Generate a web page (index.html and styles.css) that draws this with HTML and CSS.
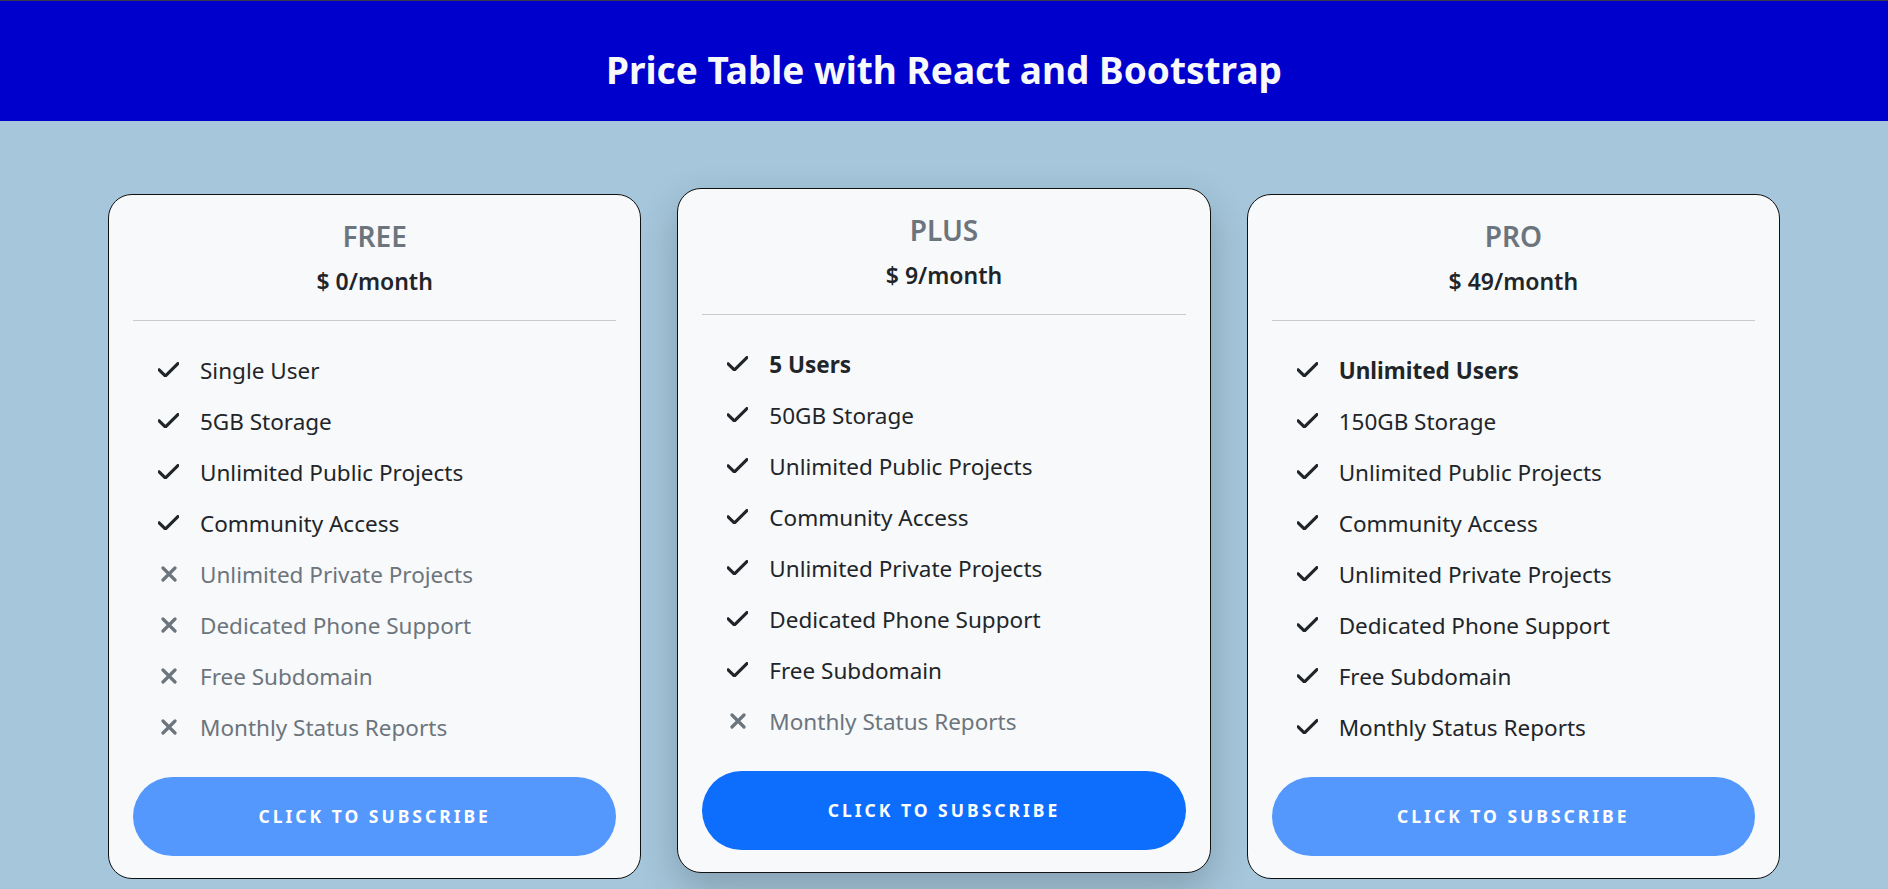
FILE: index.html
```html
<!DOCTYPE html>
<html lang="en">
<head>
<meta charset="utf-8">
<title>Price Table with React and Bootstrap</title>
<link rel="stylesheet" href="styles.css">
</head>
<body>
<header class="topbar">
  <h1 class="topbar-title">Price Table with React and Bootstrap</h1>
</header>
<main class="plans">
  <section class="plan">
    <h2 class="plan-name">FREE</h2>
    <h3 class="plan-price">$ 0/month</h3>
    <hr class="plan-rule">
    <ul class="features">
      <li class="feature"><span class="ico"><svg class="ico-check" viewBox="9 96 430 320"><path d="M438.6 105.4c12.5 12.5 12.5 32.8 0 45.3l-256 256c-12.5 12.5-32.8 12.5-45.3 0l-128-128c-12.5-12.5-12.5-32.8 0-45.3s32.8-12.5 45.3 0L160 338.7 393.4 105.4c12.5-12.5 32.8-12.5 45.3 0z"/></svg></span>Single User</li>
      <li class="feature"><span class="ico"><svg class="ico-check" viewBox="9 96 430 320"><path d="M438.6 105.4c12.5 12.5 12.5 32.8 0 45.3l-256 256c-12.5 12.5-32.8 12.5-45.3 0l-128-128c-12.5-12.5-12.5-32.8 0-45.3s32.8-12.5 45.3 0L160 338.7 393.4 105.4c12.5-12.5 32.8-12.5 45.3 0z"/></svg></span>5GB Storage</li>
      <li class="feature"><span class="ico"><svg class="ico-check" viewBox="9 96 430 320"><path d="M438.6 105.4c12.5 12.5 12.5 32.8 0 45.3l-256 256c-12.5 12.5-32.8 12.5-45.3 0l-128-128c-12.5-12.5-12.5-32.8 0-45.3s32.8-12.5 45.3 0L160 338.7 393.4 105.4c12.5-12.5 32.8-12.5 45.3 0z"/></svg></span>Unlimited Public Projects</li>
      <li class="feature"><span class="ico"><svg class="ico-check" viewBox="9 96 430 320"><path d="M438.6 105.4c12.5 12.5 12.5 32.8 0 45.3l-256 256c-12.5 12.5-32.8 12.5-45.3 0l-128-128c-12.5-12.5-12.5-32.8 0-45.3s32.8-12.5 45.3 0L160 338.7 393.4 105.4c12.5-12.5 32.8-12.5 45.3 0z"/></svg></span>Community Access</li>
      <li class="feature off"><span class="ico"><svg class="ico-x" viewBox="0 0 16 16"><path d="M2 2L14 14M14 2L2 14"/></svg></span>Unlimited Private Projects</li>
      <li class="feature off"><span class="ico"><svg class="ico-x" viewBox="0 0 16 16"><path d="M2 2L14 14M14 2L2 14"/></svg></span>Dedicated Phone Support</li>
      <li class="feature off"><span class="ico"><svg class="ico-x" viewBox="0 0 16 16"><path d="M2 2L14 14M14 2L2 14"/></svg></span>Free Subdomain</li>
      <li class="feature off"><span class="ico"><svg class="ico-x" viewBox="0 0 16 16"><path d="M2 2L14 14M14 2L2 14"/></svg></span>Monthly Status Reports</li>
    </ul>
    <button class="subscribe muted" type="button">Click to subscribe</button>
  </section>

  <section class="plan featured">
    <h2 class="plan-name">PLUS</h2>
    <h3 class="plan-price">$ 9/month</h3>
    <hr class="plan-rule">
    <ul class="features">
      <li class="feature strong"><span class="ico"><svg class="ico-check" viewBox="9 96 430 320"><path d="M438.6 105.4c12.5 12.5 12.5 32.8 0 45.3l-256 256c-12.5 12.5-32.8 12.5-45.3 0l-128-128c-12.5-12.5-12.5-32.8 0-45.3s32.8-12.5 45.3 0L160 338.7 393.4 105.4c12.5-12.5 32.8-12.5 45.3 0z"/></svg></span>5 Users</li>
      <li class="feature"><span class="ico"><svg class="ico-check" viewBox="9 96 430 320"><path d="M438.6 105.4c12.5 12.5 12.5 32.8 0 45.3l-256 256c-12.5 12.5-32.8 12.5-45.3 0l-128-128c-12.5-12.5-12.5-32.8 0-45.3s32.8-12.5 45.3 0L160 338.7 393.4 105.4c12.5-12.5 32.8-12.5 45.3 0z"/></svg></span>50GB Storage</li>
      <li class="feature"><span class="ico"><svg class="ico-check" viewBox="9 96 430 320"><path d="M438.6 105.4c12.5 12.5 12.5 32.8 0 45.3l-256 256c-12.5 12.5-32.8 12.5-45.3 0l-128-128c-12.5-12.5-12.5-32.8 0-45.3s32.8-12.5 45.3 0L160 338.7 393.4 105.4c12.5-12.5 32.8-12.5 45.3 0z"/></svg></span>Unlimited Public Projects</li>
      <li class="feature"><span class="ico"><svg class="ico-check" viewBox="9 96 430 320"><path d="M438.6 105.4c12.5 12.5 12.5 32.8 0 45.3l-256 256c-12.5 12.5-32.8 12.5-45.3 0l-128-128c-12.5-12.5-12.5-32.8 0-45.3s32.8-12.5 45.3 0L160 338.7 393.4 105.4c12.5-12.5 32.8-12.5 45.3 0z"/></svg></span>Community Access</li>
      <li class="feature"><span class="ico"><svg class="ico-check" viewBox="9 96 430 320"><path d="M438.6 105.4c12.5 12.5 12.5 32.8 0 45.3l-256 256c-12.5 12.5-32.8 12.5-45.3 0l-128-128c-12.5-12.5-12.5-32.8 0-45.3s32.8-12.5 45.3 0L160 338.7 393.4 105.4c12.5-12.5 32.8-12.5 45.3 0z"/></svg></span>Unlimited Private Projects</li>
      <li class="feature"><span class="ico"><svg class="ico-check" viewBox="9 96 430 320"><path d="M438.6 105.4c12.5 12.5 12.5 32.8 0 45.3l-256 256c-12.5 12.5-32.8 12.5-45.3 0l-128-128c-12.5-12.5-12.5-32.8 0-45.3s32.8-12.5 45.3 0L160 338.7 393.4 105.4c12.5-12.5 32.8-12.5 45.3 0z"/></svg></span>Dedicated Phone Support</li>
      <li class="feature"><span class="ico"><svg class="ico-check" viewBox="9 96 430 320"><path d="M438.6 105.4c12.5 12.5 12.5 32.8 0 45.3l-256 256c-12.5 12.5-32.8 12.5-45.3 0l-128-128c-12.5-12.5-12.5-32.8 0-45.3s32.8-12.5 45.3 0L160 338.7 393.4 105.4c12.5-12.5 32.8-12.5 45.3 0z"/></svg></span>Free Subdomain</li>
      <li class="feature off"><span class="ico"><svg class="ico-x" viewBox="0 0 16 16"><path d="M2 2L14 14M14 2L2 14"/></svg></span>Monthly Status Reports</li>
    </ul>
    <button class="subscribe" type="button">Click to subscribe</button>
  </section>

  <section class="plan">
    <h2 class="plan-name">PRO</h2>
    <h3 class="plan-price">$ 49/month</h3>
    <hr class="plan-rule">
    <ul class="features">
      <li class="feature strong"><span class="ico"><svg class="ico-check" viewBox="9 96 430 320"><path d="M438.6 105.4c12.5 12.5 12.5 32.8 0 45.3l-256 256c-12.5 12.5-32.8 12.5-45.3 0l-128-128c-12.5-12.5-12.5-32.8 0-45.3s32.8-12.5 45.3 0L160 338.7 393.4 105.4c12.5-12.5 32.8-12.5 45.3 0z"/></svg></span>Unlimited Users</li>
      <li class="feature"><span class="ico"><svg class="ico-check" viewBox="9 96 430 320"><path d="M438.6 105.4c12.5 12.5 12.5 32.8 0 45.3l-256 256c-12.5 12.5-32.8 12.5-45.3 0l-128-128c-12.5-12.5-12.5-32.8 0-45.3s32.8-12.5 45.3 0L160 338.7 393.4 105.4c12.5-12.5 32.8-12.5 45.3 0z"/></svg></span>150GB Storage</li>
      <li class="feature"><span class="ico"><svg class="ico-check" viewBox="9 96 430 320"><path d="M438.6 105.4c12.5 12.5 12.5 32.8 0 45.3l-256 256c-12.5 12.5-32.8 12.5-45.3 0l-128-128c-12.5-12.5-12.5-32.8 0-45.3s32.8-12.5 45.3 0L160 338.7 393.4 105.4c12.5-12.5 32.8-12.5 45.3 0z"/></svg></span>Unlimited Public Projects</li>
      <li class="feature"><span class="ico"><svg class="ico-check" viewBox="9 96 430 320"><path d="M438.6 105.4c12.5 12.5 12.5 32.8 0 45.3l-256 256c-12.5 12.5-32.8 12.5-45.3 0l-128-128c-12.5-12.5-12.5-32.8 0-45.3s32.8-12.5 45.3 0L160 338.7 393.4 105.4c12.5-12.5 32.8-12.5 45.3 0z"/></svg></span>Community Access</li>
      <li class="feature"><span class="ico"><svg class="ico-check" viewBox="9 96 430 320"><path d="M438.6 105.4c12.5 12.5 12.5 32.8 0 45.3l-256 256c-12.5 12.5-32.8 12.5-45.3 0l-128-128c-12.5-12.5-12.5-32.8 0-45.3s32.8-12.5 45.3 0L160 338.7 393.4 105.4c12.5-12.5 32.8-12.5 45.3 0z"/></svg></span>Unlimited Private Projects</li>
      <li class="feature"><span class="ico"><svg class="ico-check" viewBox="9 96 430 320"><path d="M438.6 105.4c12.5 12.5 12.5 32.8 0 45.3l-256 256c-12.5 12.5-32.8 12.5-45.3 0l-128-128c-12.5-12.5-12.5-32.8 0-45.3s32.8-12.5 45.3 0L160 338.7 393.4 105.4c12.5-12.5 32.8-12.5 45.3 0z"/></svg></span>Dedicated Phone Support</li>
      <li class="feature"><span class="ico"><svg class="ico-check" viewBox="9 96 430 320"><path d="M438.6 105.4c12.5 12.5 12.5 32.8 0 45.3l-256 256c-12.5 12.5-32.8 12.5-45.3 0l-128-128c-12.5-12.5-12.5-32.8 0-45.3s32.8-12.5 45.3 0L160 338.7 393.4 105.4c12.5-12.5 32.8-12.5 45.3 0z"/></svg></span>Free Subdomain</li>
      <li class="feature"><span class="ico"><svg class="ico-check" viewBox="9 96 430 320"><path d="M438.6 105.4c12.5 12.5 12.5 32.8 0 45.3l-256 256c-12.5 12.5-32.8 12.5-45.3 0l-128-128c-12.5-12.5-12.5-32.8 0-45.3s32.8-12.5 45.3 0L160 338.7 393.4 105.4c12.5-12.5 32.8-12.5 45.3 0z"/></svg></span>Monthly Status Reports</li>
    </ul>
    <button class="subscribe muted" type="button">Click to subscribe</button>
  </section>
</main>
</body>
</html>
```

FILE: styles.css
```css
* {
  box-sizing: border-box;
}

html, body {
  margin: 0;
  padding: 0;
}

body {
  min-height: 100vh;
  background: #a5c6db;
  font-family: "Noto Sans", "Open Sans", sans-serif;
  color: #212529;
}

.topbar {
  height: 121px;
  padding-top: 19px;
  background: #0000cc;
  border-top: 1px solid #3a3a4a;
  display: flex;
  align-items: center;
  justify-content: center;
}

.topbar-title {
  margin: 0;
  font-size: 37px;
  font-weight: 700;
  line-height: 1.2;
  color: #f8f9fa;
}

.plans {
  display: flex;
  align-items: flex-start;
  gap: 36px;
  padding: 0 108px;
  margin-top: 73px;
}

.plan {
  flex: 1 1 0;
  min-width: 0;
  background: #f8f9fa;
  border: 1px solid #111;
  border-radius: 24px;
  padding: 24px 24px 22px;
}

.plan.featured {
  margin-top: -6px;
  box-shadow: 0 16px 40px rgba(0, 0, 0, 0.2);
}

.plan-name {
  margin: 0 0 13px;
  text-align: center;
  font-size: 28px;
  font-weight: 600;
  line-height: 34.8px;
  color: #6c757d;
}

.plan-price {
  margin: 0;
  text-align: center;
  font-size: 23px;
  font-weight: 600;
  line-height: 28.8px;
  color: #212529;
}

.plan-rule {
  margin: 24px 0 0;
  border: 0;
  border-top: 1px solid #c8cacc;
}

.features {
  list-style: none;
  margin: 32px 0 31px;
  padding: 0 0 0 25px;
}

.feature {
  display: flex;
  align-items: center;
  height: 36px;
  margin-bottom: 15px;
  font-size: 22.5px;
  line-height: 36px;
  color: #212529;
}

.feature:last-child {
  margin-bottom: 0;
}

.feature.off {
  color: #6c757d;
}

.feature.strong {
  font-weight: 700;
}

.ico {
  flex: none;
  width: 21px;
  height: 36px;
  margin-right: 21px;
  display: flex;
  align-items: center;
  justify-content: center;
  margin-top: -2px;
}

.ico-check {
  width: 21px;
  height: 15.6px;
  fill: #212529;
}

.ico-x {
  width: 16px;
  height: 16px;
  fill: none;
  stroke: #6c757d;
  stroke-width: 3.2;
  stroke-linecap: round;
}

.subscribe {
  display: block;
  width: 100%;
  height: 79px;
  border: 0;
  border-radius: 40px;
  background: #0d6efd;
  color: #fff;
  font-family: "Noto Sans", "Open Sans", sans-serif;
  font-size: 17.5px;
  font-weight: 700;
  letter-spacing: 3px;
  text-transform: uppercase;
  cursor: pointer;
}

.subscribe.muted {
  background: #5598fd;
}
```
